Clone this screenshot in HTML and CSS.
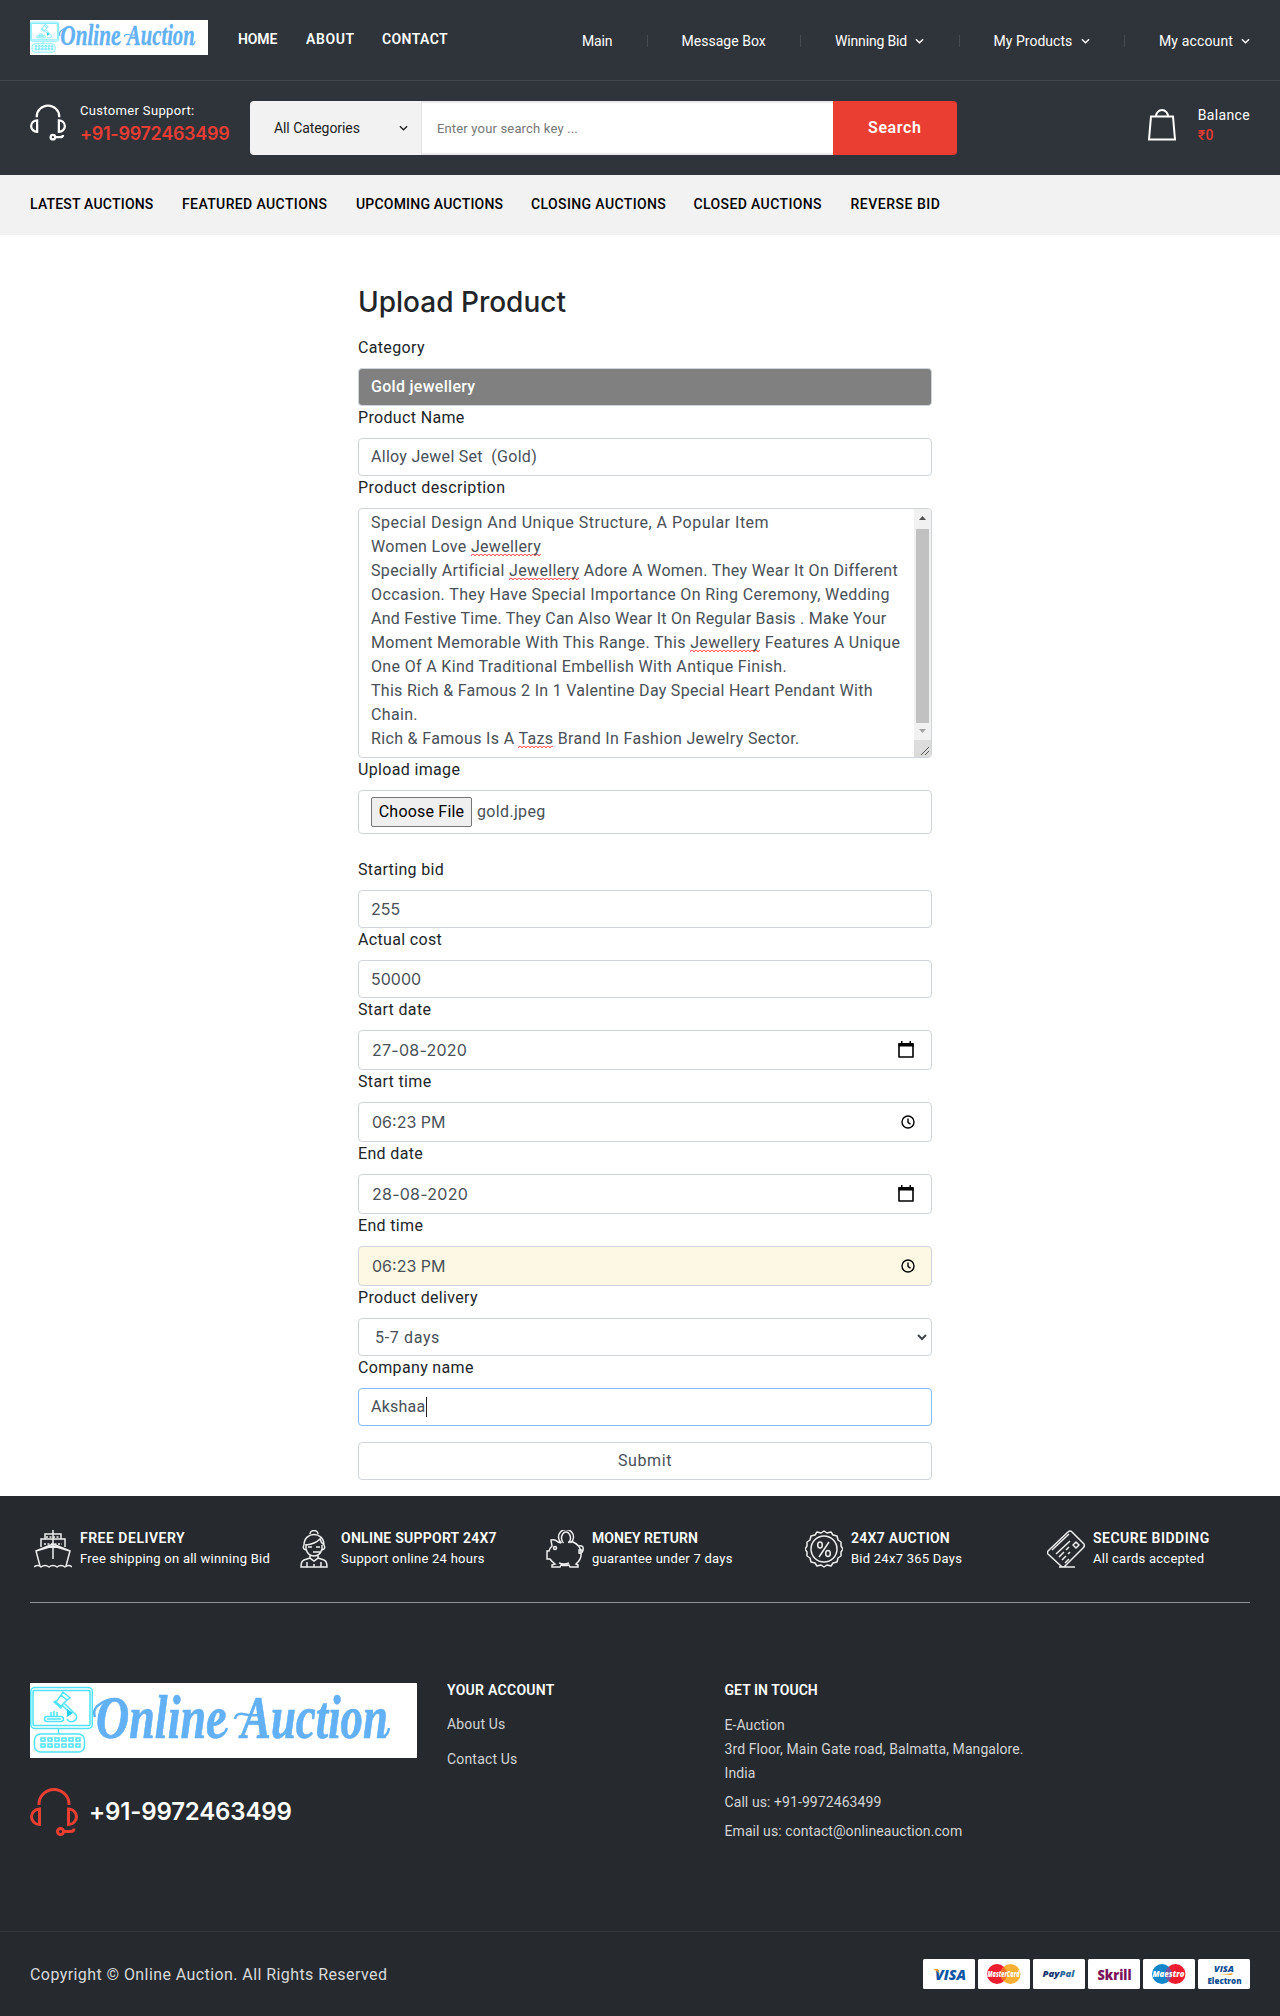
FILE: index.html
```html
<!DOCTYPE html>
<html lang="en">
<head>
<meta charset="utf-8">
<title>Online Auction - Upload Product</title>
<link rel="stylesheet" href="styles.css">
</head>
<body>
<svg class="defs" width="0" height="0" aria-hidden="true">
  <symbol id="logo" viewBox="0 0 387 75">
    <rect width="387" height="75" fill="#fff"/>
    <g fill="none" stroke="#4fe3fa" stroke-width="1.5">
      <rect x=".8" y="4.5" width="61.5" height="41" rx="4"/>
      <rect x="3" y="7.5" width="57" height="35" rx="1"/>
      <path d="M28.5 46v5"/>
      <rect x="4.500" y="51" width="50" height="18" rx="6"/>
      <path d="M11 55h4v3h-4zM18 55h4v3h-4zM25 55h4v3h-4zM32 55h4v3h-4zM39 55h4v3h-4zM46 55h4v3h-4zM11 61h4v3h-4zM18 61h4v3h-4zM25 61h4v3h-4zM32 61h4v3h-4zM39 61h4v3h-4zM46 61h4v3h-4z"/>
      <path d="M33 9l7 6-3 2-6-5zM31 12l-5 7 5 4 6-6M26 18l-2 1 7 6 1-2M34 20l12 12q2 4-2 6q-5 2-7-2M32 22l9 9"/>
      <rect x="14.500" y="33.500" width="19" height="5" rx="2.500"/>
      <path d="M17 36h14M21 29v4M24 28v5M27 29v4"/>
    </g>
    <path d="M37 26l6 4-6 4z" fill="#25cfec"/>
    <path d="M65 34q-3-8 5-13q7-5 15-5M205 36q1-6 8-5q8 2 16 1M197 45q-3 8-9 9M359 45q-1 7-6 9" fill="none" stroke="#62b0f5" stroke-width="2.500"/>
  </symbol>
  <symbol id="headset" viewBox="0 0 48 48">
    <g fill="none" stroke="currentColor" stroke-width="3">
      <path d="M9 17v-1a15 14.500 0 0 1 30 0v1"/>
      <path d="M9.500 21v15.500a8 7.750 0 0 1 0-15.500zM38.500 21v15.500a8 7.750 0 0 0 0-15.500z"/>
      <circle cx="30.500" cy="43.500" r="3"/>
      <path d="M34 43.500h6q4 0 4-3"/>
    </g>
  </symbol>
  <symbol id="chevron" viewBox="0 0 10 6"><path d="M1 1l4 4 4-4" fill="none" stroke="currentColor" stroke-width="1.500"/></symbol>
  <symbol id="calendar" viewBox="0 0 16 17"><path d="M1 3h14v13h-14z" fill="none" stroke="#000" stroke-width="1.600" stroke-linejoin="round"/><path d="M.5 2h15v3.500H.5zM3 0h1.500v3H3zM11.500 0h1.500v3h-1.500z"/></symbol>
  <symbol id="clock" viewBox="0 0 14 14"><g fill="none" stroke="#000" stroke-width="1.400"><circle cx="7" cy="7" r="6"/><path d="M7 3.500V7.300l2.500 2"/></g></symbol>
</svg>

<header class="header">
  <div class="topbar">
    <svg width="178" height="35" viewBox="0 0 387 75" preserveAspectRatio="none">
      <use href="#logo" width="387" height="75"/>
      <g class="logo-text"><text transform="translate(66 54.5) scale(.755 1)">Online</text><text transform="translate(211 54.5) scale(.735 1)">Auction</text></g>
    </svg>
    <nav class="main-nav"><a class="home">HOME</a><a class="about">ABOUT</a><a>CONTACT</a></nav>
    <nav class="user-nav">
      <a class="u-main">Main</a>
      <a class="u-msg">Message Box</a>
      <a class="u-win">Winning Bid<svg width="9" height="6"><use href="#chevron"/></svg></a>
      <a class="u-prod">My Products<svg width="9" height="6"><use href="#chevron"/></svg></a>
      <a class="u-acc">My account<svg width="9" height="6"><use href="#chevron"/></svg></a>
    </nav>
  </div>
  <div class="searchbar">
    <svg class="support-icon" width="36" height="37"><use href="#headset"/></svg>
    <div class="support"><span>Customer Support:</span><strong>+91-9972463499</strong></div>
    <div class="search">
      <div class="search-cat">All Categories<svg width="9" height="6"><use href="#chevron"/></svg></div>
      <div class="search-input">Enter your search key ...</div>
      <div class="search-btn">Search</div>
    </div>
    <svg class="bag" width="28" height="34" viewBox="0 0 28 34" fill="none" stroke="#fff" stroke-width="2"><path d="M3 8.500h22l2 23H1zM8 8.500a6 6.500 0 0 1 12 0"/></svg>
    <div class="balance"><span>Balance</span><strong>₹0</strong></div>
  </div>
</header>

<nav class="subnav">
  <a>LATEST AUCTIONS</a><a>FEATURED AUCTIONS</a><a>UPCOMING AUCTIONS</a><a>CLOSING AUCTIONS</a><a>CLOSED AUCTIONS</a><a>REVERSE BID</a>
</nav>

<main class="form">
  <h1>Upload Product</h1>
  <label>Category</label>
  <div class="control category">Gold jewellery</div>
  <label>Product Name</label>
  <div class="control pre">Alloy Jewel Set  (Gold)</div>
  <label class="desc-label">Product description</label>
  <div class="control textarea">
    <div class="lines">
      <p>Special Design And Unique Structure, A Popular Item</p>
      <p>Women Love <u>Jewellery</u></p>
      <p>Specially Artificial <u>Jewellery</u> Adore A Women. They Wear It On Different</p>
      <p>Occasion. They Have Special Importance On Ring Ceremony, Wedding</p>
      <p>And Festive Time. They Can Also Wear It On Regular Basis . Make Your</p>
      <p>Moment Memorable With This Range. This <u>Jewellery</u> Features A Unique</p>
      <p>One Of A Kind Traditional Embellish With Antique Finish.</p>
      <p>This Rich &amp; Famous 2 In 1 Valentine Day Special Heart Pendant With</p>
      <p>Chain.</p>
      <p>Rich &amp; Famous Is A <u>Tazs</u> Brand In Fashion Jewelry Sector.</p>
    </div>
    <div class="scrollbar">
      <svg width="17" height="20"><path d="M5 11l3.500-4 3.500 4z" fill="#505050"/></svg>
      <div class="thumb"></div>
      <svg width="17" height="17"><path d="M5 6l3.500 4L12 6z" fill="#a3a3a3"/></svg>
      <svg class="corner" width="17" height="17"><path d="M7 15l8-8M11 15l4-4" stroke="#555" stroke-width="1"/></svg>
    </div>
  </div>
  <label>Upload image</label>
  <div class="control file"><span class="file-btn">Choose File</span><span>gold.jpeg</span></div>
  <label class="spaced">Starting bid</label>
  <div class="control digits">255</div>
  <label>Actual cost</label>
  <div class="control digits">50000</div>
  <label>Start date</label>
  <div class="control picker date"><span>27-08-2020</span><svg width="16" height="17"><use href="#calendar"/></svg></div>
  <label>Start time</label>
  <div class="control picker"><span>06:23 PM</span><svg width="14" height="14"><use href="#clock"/></svg></div>
  <label>End date</label>
  <div class="control picker date"><span>28-08-2020</span><svg width="16" height="17"><use href="#calendar"/></svg></div>
  <label>End time</label>
  <div class="control picker filled"><span>06:23 PM</span><svg width="14" height="14"><use href="#clock"/></svg></div>
  <label>Product delivery</label>
  <div class="control select"><span>5-7 days</span><svg width="10" height="7" viewBox="0 0 10 7"><path d="M1 1l4 4 4-4" fill="none" stroke="#3d444b" stroke-width="2"/></svg></div>
  <label>Company name</label>
  <div class="control focused">Akshaa<i class="caret"></i></div>
  <div class="control submit">Submit</div>
</main>

<footer class="footer">
  <div class="features">
    <div class="feature">
      <svg width="38" height="38" viewBox="0 0 38 38" fill="none" stroke="#eee" stroke-width="1.500"><path d="M19 0v29M11 9V4h16v5M7 17V9h24v8M19 14L2 21l4 15M19 14l17 7-4 15M2 21l17-5 17 5M0 37q4-3 7 0q4-3 8 0q4-3 8 0q4-3 8 0q4-3 7 0"/><path d="M12 7h14M10 14h18" stroke-dasharray="2 1.500"/></svg>
      <div><strong class="f1">FREE DELIVERY</strong><span>Free shipping on all winning Bid</span></div>
    </div>
    <div class="feature">
      <svg width="38" height="38" viewBox="0 0 38 38" fill="none" stroke="#eee" stroke-width="1.500"><path d="M15 4a4 3.500 0 0 1 8 0M9 15C9 1 29 1 29 15M9 15q-2 4 2 5M29 15q2 4-2 5M11 15q9-1 14-6q1 4 4 6M11 14v5q2 7 8 7t8-7v-4M13 17h4M21 17h4M18 22h7M15 25v3l4 3 4-3v-3M15 28l-6 2q-3 1-3 7h26q0-6-3-7l-6-2M12 37v-5M26 37v-5M19 34v3"/></svg>
      <div><strong>ONLINE SUPPORT 24X7</strong><span>Support online 24 hours</span></div>
    </div>
    <div class="feature">
      <svg width="38" height="38" viewBox="0 0 38 38" fill="none" stroke="#eee" stroke-width="1.500"><path d="M15.500 13a7.500 7.500 0 1 1 9 0M17.500 13a4.500 6 0 1 1 5 0M15 13l-3-1q-3-3-7-2l1 6q-2 2-3 5H1v8h3q2 3 5 5l-3 1v2h8l1-2q4 1 8 0l1 2h8v-2l-2-1q6-5 5-12q-1-7-8-10l-5 0M33 16q5-1 4 4-1 4-4 3v-3h4M13 33q5 2 10 0"/><circle cx="9" cy="18" r="1.500"/></svg>
      <div><strong class="f3">MONEY RETURN</strong><span>guarantee under 7 days</span></div>
    </div>
    <div class="feature">
      <svg width="38" height="38" viewBox="0 0 38 38" fill="none" stroke="#eee" stroke-width="1.500"><path d="M19 1l3 2 4-1 2 3 4 1 1 4 3 2v4l2 3-2 3v4l-3 2-1 4-4 1-2 3-4-1-3 2-3-2-4 1-2-3-4-1-1-4-3-2v-4l-2-3 2-3v-4l3-2 1-4 4-1 2-3 4 1z" stroke-linejoin="round"/><circle cx="19" cy="19" r="13"/><path d="M24 12L14 27"/><ellipse cx="15" cy="15" rx="2.300" ry="3"/><ellipse cx="23" cy="23.500" rx="2.300" ry="3"/></svg>
      <div><strong>24X7 AUCTION</strong><span>Bid 24x7 365 Days</span></div>
    </div>
    <div class="feature">
      <svg width="38" height="38" viewBox="0 0 38 38" fill="none" stroke="#eee" stroke-width="1.500" stroke-linejoin="round"><path d="M1 21L21 2q2-2 4 0l12 12q1 2-1 4L18 36q-2 2-4 0L1 24q-1-1 0-3zM5 20L22 4M9 24l14-13M12 27l5-5M19 20l3-3M15 30l4-4M21 24l2-2M18 33l4-4M26 15l3-3 3 3-3 3zM12 37h16"/></svg>
      <div><strong class="f5">SECURE BIDDING</strong><span>All cards accepted</span></div>
    </div>
  </div>
  <div class="footer-main">
    <div class="brand">
      <svg width="387" height="75" viewBox="0 0 387 75">
        <use href="#logo" width="387" height="75"/>
        <g class="logo-text"><text transform="translate(66 54.5) scale(.755 1)">Online</text><text transform="translate(211 54.5) scale(.735 1)">Auction</text></g>
      </svg>
      <div class="brand-phone"><svg width="48" height="48"><use href="#headset"/></svg><strong>+91-9972463499</strong></div>
    </div>
    <div class="account">
      <h2>YOUR ACCOUNT</h2>
      <a>About Us</a>
      <a>Contact Us</a>
    </div>
    <div class="contact">
      <h2>GET IN TOUCH</h2>
      <p>E-Auction<br>3rd Floor, Main Gate road, Balmatta, Mangalore.<br>India</p>
      <p class="line">Call us: +91-9972463499</p>
      <p class="line">Email us: contact@onlineauction.com</p>
    </div>
  </div>
  <div class="footer-bottom">
    <p>Copyright © Online Auction. All Rights Reserved</p>
    <svg width="327" height="30" font-family="Open Sans, sans-serif" font-weight="800" letter-spacing="0">
      <g fill="#fff"><rect width="52" height="30" rx="1.500"/><rect x="55" width="52" height="30" rx="1.500"/><rect x="110" width="52" height="30" rx="1.500"/><rect x="165" width="52" height="30" rx="1.500"/><rect x="220" width="52" height="30" rx="1.500"/><rect x="275" width="52" height="30" rx="1.500"/></g>
      <text x="12" y="20.500" font-size="14" font-style="italic" fill="#0d56a6" textLength="31" lengthAdjust="spacingAndGlyphs">VISA</text>
      <path d="M10.500 10h4.500l2 6q-2-4-6.500-6z" fill="#f5a01f"/>
      <circle cx="74" cy="15" r="10" fill="#eb1d2e"/><circle cx="87.500" cy="15" r="10" fill="#fbb034"/><path d="M80.700 7.700a10 10 0 0 1 0 14.600a10 10 0 0 1 0-14.600z" fill="#f3702a"/>
      <text x="64.500" y="18" font-size="8" font-style="italic" fill="#fff" textLength="32" lengthAdjust="spacingAndGlyphs">MasterCard</text>
      <text x="119.500" y="17.500" font-size="9" font-style="italic" fill="#21366f" textLength="32" lengthAdjust="spacingAndGlyphs">Pay<tspan fill="#2c6a9c">Pal</tspan></text>
      <text x="174.500" y="20.500" font-size="14" fill="#7a1259" textLength="34" lengthAdjust="spacingAndGlyphs">Skrill</text>
      <circle cx="239" cy="15" r="10" fill="#1286cb"/><circle cx="252.500" cy="15" r="10" fill="#ec1c2e"/><path d="M245.700 7.700a10 10 0 0 1 0 14.600a10 10 0 0 1 0-14.600z" fill="#75549b"/>
      <text x="229.500" y="18" font-size="9" font-style="italic" fill="#fff" textLength="32" lengthAdjust="spacingAndGlyphs">Maestro</text>
      <text x="291" y="13" font-size="9" font-style="italic" fill="#0d4d91" textLength="20" lengthAdjust="spacingAndGlyphs">VISA</text>
      <path d="M292 16q9 0 18-2q-1 2-2 2-8-1-16 0z" fill="#f5a01f"/>
      <text x="284.500" y="25" font-size="8" fill="#0d4d91" textLength="34" lengthAdjust="spacingAndGlyphs">Electron</text>
    </svg>
  </div>
</footer>
</body>
</html>
```
FILE: styles.css
```css
* { box-sizing: border-box; }
body { margin: 0; background: #fff; color: #212529; font: 400 16px/24px Roboto, sans-serif; letter-spacing: .34px; }
p, h1, h2 { margin: 0; }
svg { display: block; flex: none; }
.defs { position: absolute; }
strong { font-weight: 500; }
.logo-text { fill: #62b0f5; stroke: #62b0f5; stroke-width: .7px; font: italic 700 61px "Liberation Serif", serif; letter-spacing: 0; }

.header { height: 175px; background: #2f333a; color: #fff; }
.topbar { display: flex; align-items: flex-start; height: 81px; padding: 20px 30px 0; border-bottom: 1px solid #434850; }
.main-nav { display: flex; padding: 7px 0 0 30px; font-size: 14px; font-weight: 600; letter-spacing: .4px; }
.main-nav .home { width: 68px; letter-spacing: -.1px; }
.main-nav .about { width: 76px; letter-spacing: .6px; }
.user-nav { display: flex; gap: 34px; margin-left: auto; padding-top: 15px; font-size: 14px; line-height: 12px; letter-spacing: .03px; }
.user-nav a { display: flex; align-items: center; justify-content: space-between; box-sizing: content-box; white-space: nowrap; padding-right: 34.5px; border-right: 1px solid #454a52; }
.user-nav .u-main { width: 30px; letter-spacing: -.2px; }
.user-nav .u-msg { width: 84px; }
.user-nav .u-win { width: 89px; letter-spacing: -.16px; }
.user-nav .u-prod { width: 96px; }
.user-nav .u-acc { width: 91px; letter-spacing: .14px; padding-right: 0; border: 0; }
.searchbar { display: flex; align-items: flex-start; height: 94px; padding: 20px 30px; }
.support-icon { margin-top: 3px; }
.support { display: flex; flex-direction: column; width: 170px; margin: -2px 0 0 14px; font-size: 13px; }
.support strong { font: 600 18px/21px Inter, sans-serif; color: #e63c33; letter-spacing: -.3px; }
.search { display: flex; width: 707px; height: 54px; border-radius: 4px; overflow: hidden; font-size: 14px; }
.search-cat { display: flex; align-items: center; justify-content: space-between; width: 172px; padding: 0 13px 1px 24px; background: #f2f2f2; border-right: 1px solid #e4e4e4; color: #222; letter-spacing: -.06px; }
.search-input { display: flex; align-items: center; flex: 1; padding: 2px 0 0 15px; background: #fff; border: solid #ebebeb; border-width: 2px 0; color: #777; font-size: 13px; letter-spacing: .17px; }
.search-btn { display: grid; place-items: center; width: 124px; background: #eb3e32; font-size: 16px; font-weight: 600; letter-spacing: .6px; }
.bag { margin: 7px 0 0 191px; }
.balance { display: flex; flex-direction: column; margin: 4px 0 0 22px; font-size: 14px; line-height: 20px; white-space: nowrap; }
.balance strong { color: #e63c33; line-height: 21px; }

.subnav { display: grid; grid-template-columns: 152px 174px 175px 162.500px 157px auto; height: 60px; align-items: center; padding: 0 30px 2px; background: #f2f2f2; color: #000; font-size: 14px; font-weight: 500; letter-spacing: .38px; white-space: nowrap; }
.subnav a:nth-child(1), .subnav a:nth-child(3) { letter-spacing: .2px; }
.subnav a:nth-child(6) { letter-spacing: .52px; }

.form { width: 574px; margin: 0 0 0 358px; padding: 49px 0 16px; }
.form h1 { margin-bottom: 17px; padding-top: 2px; font: 500 28px/33px Inter, sans-serif; letter-spacing: 0; }
.form label { display: block; margin-bottom: 8px; }
.form .desc-label { letter-spacing: .42px; }
.form .spaced { margin-top: 24px; }
.control { display: flex; align-items: center; height: 38px; padding: 0 12px; border: 1px solid #ced4da; border-radius: 4px; background: #fff; color: #495057; }
.category { background: #808080; color: #fff; font-weight: 500; letter-spacing: .29px; }
.pre { white-space: pre; letter-spacing: .28px; }
.digits { padding-bottom: 1px; font-family: Inter, sans-serif; letter-spacing: 0; }
.textarea { align-items: stretch; justify-content: space-between; height: 250px; padding: 0 0 0 12px; overflow: hidden; }
.lines { padding-top: 2px; white-space: nowrap; }
.lines p:nth-child(1) { letter-spacing: .51px; }
.lines p:nth-child(4) { letter-spacing: .38px; }
.lines p:nth-child(5) { letter-spacing: .24px; }
.lines p:nth-child(8) { letter-spacing: .28px; }
.lines u {
  padding-bottom: 1px;
  text-decoration: none;
  background:
    linear-gradient(45deg, transparent 60%, #f33 75%, transparent 90%) 0 100% / 4px 3px repeat-x,
    linear-gradient(135deg, transparent 10%, #f33 25%, transparent 40%) 0 100% / 4px 3px repeat-x;
}
.scrollbar { display: flex; flex-direction: column; width: 17px; background: #f1f1f1; }
.thumb { flex: 1; margin: 0 2px; background: #c1c1c1; }
.corner { background: #dcdcdc; }
.file { height: 44px; gap: 5px; }
.file-btn { width: 101px; height: 30px; padding: 2px 0; border: 1px solid #767676; border-radius: 2px; background: #efefef; color: #000; text-align: center; letter-spacing: .2px; }
.picker { height: 40px; justify-content: space-between; padding: 0 16px 1px 13px; font-family: Inter, sans-serif; letter-spacing: 0; }
.picker.date { padding-right: 17px; letter-spacing: .25px; }
.filled { background: #fdf8e3; }
.select { justify-content: space-between; padding: 1px 4px 0 16px; letter-spacing: .65px; }
.focused { border-color: #80bdff; letter-spacing: .25px; }
.caret { width: 1px; height: 20px; background: #222; }
.submit { justify-content: center; margin-top: 16px; letter-spacing: .59px; }

.footer { height: 520px; background: #262a2f; color: #fff; }
.features { display: grid; grid-template-columns: 261px 251px 259px 242px auto; height: 107px; margin: 0 30px; padding: 32px 0 0 4px; border-bottom: 1px solid #909294; font-size: 13px; line-height: 20px; letter-spacing: .25px; white-space: nowrap; }
.feature { display: flex; gap: 8px; }
.feature svg { margin-top: 2px; }
.feature span { display: block; padding-top: 1px; }
.feature strong { display: block; font-size: 14px; font-weight: 600; letter-spacing: .26px; }
.feature .f1, .feature .f5 { letter-spacing: .5px; }
.feature .f3 { letter-spacing: .05px; }
.footer-main { display: grid; grid-template-columns: 417px 277.500px auto; height: 328px; padding: 80px 30px 0; font-size: 14px; color: #d3d4d5; letter-spacing: .08px; }
.brand-phone { display: flex; align-items: center; gap: 12px; margin-top: 30px; color: #eb3e32; }
.brand-phone strong { margin-left: -1px; color: #fff; font: 600 24px/24px Inter, sans-serif; letter-spacing: -.15px; }
.footer h2 { font-size: 14px; font-weight: 600; line-height: 14px; color: #fff; letter-spacing: .28px; }
.account a { display: block; margin-top: 15px; line-height: 24px; letter-spacing: .18px; }
.account a + a { margin-top: 11px; }
.footer .contact h2 { letter-spacing: .05px; }
.contact p { margin-top: 16px; }
.contact .line { margin-top: 5px; }
.footer-bottom { display: flex; align-items: center; justify-content: space-between; height: 85px; padding: 0 30px; border-top: 1px solid #33373c; color: #d8d9da; letter-spacing: .42px; }
.footer-bottom p { padding-top: 2px; }
```
